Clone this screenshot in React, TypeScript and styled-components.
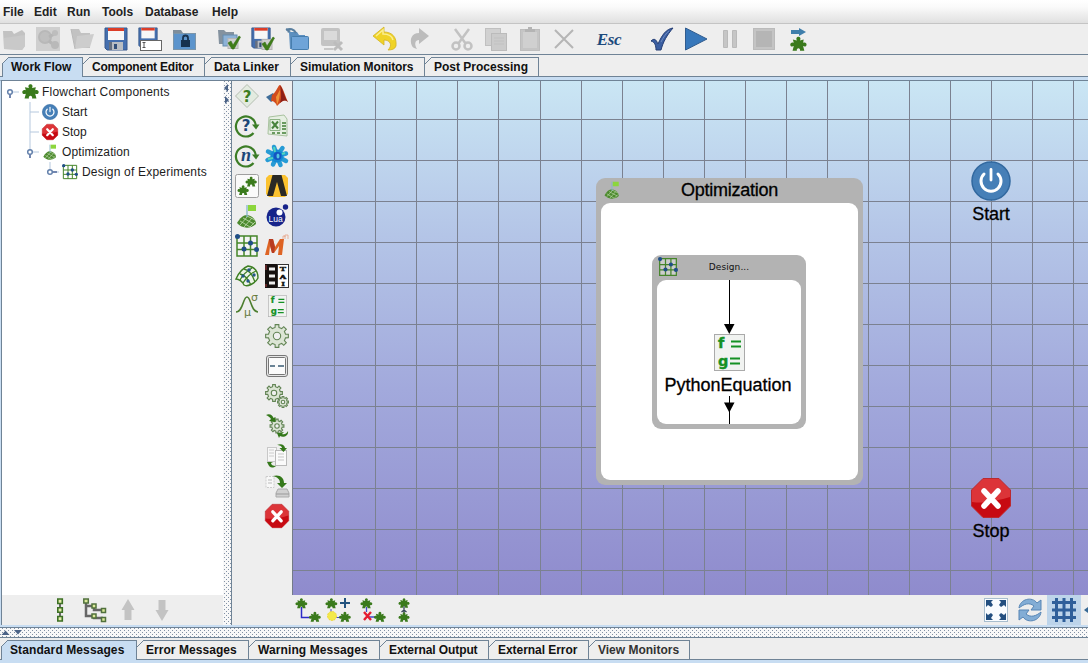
import React from "react";
import styled, { createGlobalStyle, css } from "styled-components";

const LINE = "#6f8396";
const BLUE = "#c8ddf2";
const PANEL = "#eeeeee";

const GlobalStyle = createGlobalStyle`
  * { box-sizing: border-box; }
  html, body { margin: 0; padding: 0; }
  body { font-family: "Liberation Sans", Arial, sans-serif; font-size: 12px; color: #222; background: ${PANEL}; overflow: hidden; }
  svg { display: block; flex: none; overflow: visible; }
`;

/* ---------- layout parts ---------- */

const Window = styled.div`
  width: 1088px;
  height: 663px;
  display: flex;
  flex-direction: column;
  background: ${PANEL};
  overflow: hidden;
`;

const MenuBar = styled.nav`
  height: 24px;
  display: flex;
  align-items: center;
  padding: 1px 0 0 3px;
  background: linear-gradient(#ffffff, #fafafa 30%, #e0e0e0);
  border-bottom: 1px solid #c4c4c4;
`;

const MenuItem = styled.span<{ $w: number }>`
  width: ${(p) => p.$w}px;
  font-weight: bold;
  letter-spacing: 0;
  white-space: nowrap;
`;

const ToolBar = styled.div`
  height: 31px;
  display: flex;
  align-items: center;
  margin-left: -3px;
  border-bottom: 1px solid ${LINE};
`;

const ToolGroup = styled.div<{ $gap: number }>`
  display: flex;
  margin-left: ${(p) => p.$gap}px;
`;

const ToolButton = styled.span`
  width: 34px;
  height: 30px;
  display: flex;
  align-items: center;
  justify-content: center;
`;

const EscLabel = styled.span`
  padding-top: 2px;
  font: italic bold 17px "Liberation Serif", serif;
  color: #1d4a7c;
  letter-spacing: -0.3px;
`;

const TabStrip = styled.div<{ $pad: number; $left: number }>`
  display: flex;
  padding-top: ${(p) => p.$pad}px;
  padding-left: ${(p) => p.$left}px;
  border-bottom: 1px solid ${LINE};
`;

const Tab = styled.div<{ $w: number; $active?: boolean; $dim?: boolean; $ls: number }>`
  position: relative;
  width: ${(p) => p.$w}px;
  height: 19px;
  padding-left: 9px;
  line-height: 18px;
  font-weight: bold;
  letter-spacing: ${(p) => p.$ls}px;
  white-space: nowrap;
  color: ${(p) => (p.$dim ? "#333" : "#111")};
  border-top: 1px solid ${LINE};
  border-right: 1px solid ${LINE};
  ${(p) =>
    p.$active &&
    css`
      border-left: 1px solid ${LINE};
      background: ${BLUE};
      margin-bottom: -1px;
      height: 20px;
      padding-left: 8px;
    `}
  &::before {
    content: "";
    position: absolute;
    left: ${(p) => (p.$active ? -1 : 0)}px;
    top: -1px;
    width: 7px;
    height: 7px;
    background: linear-gradient(135deg, ${PANEL} 0 43%, ${LINE} 44% 53%, ${(p) => (p.$active ? BLUE : PANEL)} 54%);
  }
`;

const BlueStripe = styled.div<{ $h: number }>`
  height: ${(p) => p.$h}px;
  background: ${BLUE};
`;

const Workspace = styled.main`
  height: 546px;
  display: flex;
  border-top: 1px solid ${LINE};
  border-left: 1px solid ${BLUE};
`;

const TreePanel = styled.aside`
  width: 222px;
  display: flex;
  flex-direction: column;
  border-left: 1px solid ${LINE};
`;

const Tree = styled.div`
  flex: 1;
  background: #fff;
  padding-top: 1px;
`;

const TreeRow = styled.div`
  height: 20px;
  display: flex;
  align-items: center;
  margin-left: -2px;
  color: #1c1c1c;
  white-space: nowrap;
`;

const TreeText = styled.span<{ $ls: number }>`
  padding-left: 2px;
  font-size: 12px;
  letter-spacing: ${(p) => p.$ls}px;
`;

const TreeActions = styled.div`
  height: 30px;
  display: flex;
  align-items: center;
  padding-left: 41px;
  background: ${PANEL};
`;

const bumps = css`
  background-color: #f8f8f8;
  background-image: radial-gradient(circle at 0.5px 0.5px, #8291a5 0.5px, transparent 0.6px),
    radial-gradient(circle at 0.5px 0.5px, #8291a5 0.5px, transparent 0.6px);
  background-size: 4px 4px;
`;

const VDivider = styled.div`
  width: 9px;
  border-right: 1px solid ${LINE};
  ${bumps}
  background-position: 1px 0, 3px 2px;
`;

const HDivider = styled.div`
  height: 11px;
  border-top: 1px solid ${LINE};
  border-bottom: 1px solid ${LINE};
  ${bumps}
  background-position: 0 2px, 2px 4px;
`;

const Palette = styled.div`
  width: 60px;
  display: flex;
`;

const PaletteColumn = styled.div`
  width: 30px;
  display: flex;
  flex-direction: column;
`;

const PaletteCell = styled.span`
  height: 30px;
  display: flex;
  align-items: center;
  justify-content: center;
`;

const CanvasColumn = styled.section`
  flex: 1;
  min-width: 0;
  display: flex;
  flex-direction: column;
`;

const Canvas = styled.div`
  position: relative;
  flex: 1;
  overflow: hidden;
  border-left: 1px solid #747b88;
  background: linear-gradient(#cae6f4, #b4c5e7 30%, #a2a9dc 60%, #8f8bcd);
`;

const CanvasBar = styled.div`
  height: 30px;
  display: flex;
  align-items: center;
  justify-content: space-between;
  padding-left: 2px;
`;

const BarGroup = styled.div`
  display: flex;
  height: 30px;
`;

const BarButton = styled.span<{ $w?: number; $on?: boolean }>`
  width: ${(p) => p.$w ?? 34}px;
  display: flex;
  align-items: center;
  justify-content: center;
  background: ${(p) => (p.$on ? "#bdd4ea" : "transparent")};
`;

/* nodes on the free flowchart canvas */

const Node = styled.div<{ $x: number; $y: number; $w: number }>`
  position: absolute;
  left: ${(p) => p.$x}px;
  top: ${(p) => p.$y}px;
  width: ${(p) => p.$w}px;
  display: flex;
  flex-direction: column;
  align-items: center;
  gap: 3px;
`;

const NodeLabel = styled.span<{ $ls?: number }>`
  font-size: 18px;
  line-height: 20px;
  color: #000;
  -webkit-text-stroke: 0.3px #000;
  letter-spacing: ${(p) => p.$ls ?? 0}px;
  white-space: nowrap;
`;

const Container = styled.div<{ $x: number; $y: number; $w: number; $h: number }>`
  position: absolute;
  left: ${(p) => p.$x}px;
  top: ${(p) => p.$y}px;
  width: ${(p) => p.$w}px;
  height: ${(p) => p.$h}px;
  display: flex;
  flex-direction: column;
  padding: 0 5px 5px;
  border-radius: 9px;
  background: #b3b3b3;
`;

const ContainerHeader = styled.div`
  height: 25px;
  display: grid;
  grid-template-columns: 22px 1fr 22px;
  align-items: center;
  justify-items: center;
`;

const ContainerBody = styled.div`
  position: relative;
  flex: 1;
  border-radius: 9px;
  background: #fff;
`;

const SmallLabel = styled.span`
  font: 9px "DejaVu Sans", sans-serif;
  letter-spacing: 0.1px;
  color: #111;
`;

const PythonNode = styled.div`
  height: 100%;
  display: flex;
  flex-direction: column;
  align-items: center;
`;

const PythonCaption = styled.div`
  padding: 4px 2px 0 0;
`;

/* ---------- icons ---------- */

type SvgProps = { s?: number; w?: number; h?: number; box?: string; children: React.ReactNode };
const Svg = ({ s = 24, w, h, box, children }: SvgProps) => (
  <svg width={w ?? s} height={h ?? s} viewBox={box ?? "0 0 24 24"} fill="none">
    {children}
  </svg>
);

const GREEN = "#3a7a1c";
const GREY = "#c2c2c2";
const PUZZLE =
  "M3 5L9.500 6.500C5.500 -1.500 18.500 -1.500 14.500 6.500L20.500 5L19.500 10C27 7 27 19 19.500 15.500L21.500 23H14.500C16 17.500 8 17.500 9.500 23H2.500L4.500 15.500C-3 19 -3 7 4.500 10Z";

const Puzzle = ({ x = 0, y = 0, k = 1, c = GREEN }: { x?: number; y?: number; k?: number; c?: string }) => (
  <path d={PUZZLE} fill={c} transform={`translate(${x} ${y}) scale(${k})`} />
);

const Folder = ({ open, c = GREY }: { open?: boolean; c?: string }) =>
  open ? (
    <Svg>
      <path d="M1 2H9L11 6H20V21H5Z" fill={c} />
      <path d="M7 9L24 7L20 20L5 22Z" fill="#cdcdcd" />
      <path d="M1 2L5 22" stroke="#b9b9b9" />
    </Svg>
  ) : (
    <Svg>
      <path d="M1 4H10L12 7L20 3L23 6V19L20 23L2 22Z" fill={c} />
      <path d="M2 11L23 8V19L20 23L2 22Z" fill="#c9c9c9" />
    </Svg>
  );

const GreyBrowse = () => (
  <Svg>
    <rect x="0" y="0" width="24" height="24" fill="#cfcfcf" />
    <circle cx="9" cy="10" r="6" fill="#bfbfbf" stroke="#b8b8b8" strokeWidth="2" />
    <path d="M13 10L20 6M13 14L19 19" stroke="#b5b5b5" strokeWidth="3" />
    <circle cx="19" cy="6" r="3" fill="#bdbdbd" />
    <circle cx="19" cy="18" r="4" fill="#b9b9b9" />
  </Svg>
);

const Disk = ({ x = 0, y = 0, w = 24, h = 24 }) => (
  <svg x={x} y={y} width={w} height={h} viewBox="0 0 24 24" preserveAspectRatio="none">
    <path d="M1 1H23V23H3L1 21Z" fill="#456fae" stroke="#38598c" />
    <rect x="4" y="1" width="16" height="12" fill="#f7f7f7" />
    <rect x="4" y="1" width="16" height="3" fill="#dc3d28" />
    <rect x="5" y="15" width="14" height="8" fill="#667080" />
    <rect x="8" y="15" width="11" height="8" fill="#b9bdc2" />
    <rect x="10" y="17" width="3" height="5" fill="#334f78" />
  </svg>
);

const Save = () => <Svg><Disk /></Svg>;
const SaveAs = () => (
  <Svg>
    <Disk x={0} y={0} w={20} h={21} />
    <rect x="2.500" y="13.500" width="21" height="10" fill="#fff" stroke="#666" />
    <path d="M4.500 15.500h3M4.500 20.500h3M6 16v4" stroke="#555" />
  </Svg>
);
const LockedFolder = () => (
  <Svg>
    <path d="M1 3H9L11 6H21V10H1Z" fill="#7f8e9b" />
    <rect x="1.500" y="6.500" width="22" height="16" fill="#5c94cc" stroke="#7b95aa" />
    <rect x="9" y="13" width="9" height="7" fill="#17324f" />
    <path d="M11 13v-2a2.500 2.500 0 0 1 5 0v2" stroke="#17324f" strokeWidth="1.800" />
  </Svg>
);
const GreenCheck = ({ x = 0, y = 0 }) => (
  <g transform={`translate(${x} ${y})`}>
    <rect x="0" y="2.500" width="10" height="10" fill="#cfcfcf" stroke="#b5b5b5" />
    <path d="M0 7L3 5L5 9L11 0L12.500 1L6 13H4Z" fill="#3f7d18" stroke="#37701a" strokeWidth=".6" />
  </g>
);
const FolderCheck = () => (
  <Svg>
    <path d="M1 3H7L9 5H17V17H2Z" fill="#84929f" />
    <rect x="6" y="8" width="14" height="11" fill="#8db2d7" stroke="#668cae" />
    <GreenCheck x={11} y={9} />
  </Svg>
);
const SaveCheck = () => (
  <Svg>
    <Disk x={0} y={0} w={20} h={22} />
    <GreenCheck x={11} y={10} />
  </Svg>
);
const OpenFolderBlue = () => (
  <Svg>
    <path d="M4 5H12L14 8H20V22H5Z" fill="#5c8fbf" />
    <rect x="6.500" y="9.500" width="17" height="13" rx="1" fill="#6fa4d8" stroke="#477eae" />
    <path d="M1 3C5 1 9 2 11 6" stroke="#5a7f9f" strokeWidth="2" />
    <path d="M1 1L3 6L6 4Z" fill="#5a7f9f" />
  </Svg>
);
const GreySaveX = () => (
  <Svg>
    <rect x="2" y="1" width="19" height="18" rx="2" fill="#c3c3c3" />
    <rect x="5" y="4" width="13" height="9" fill="#dadada" />
    <path d="M5 22H14" stroke="#c8c8c8" strokeWidth="2" />
    <path d="M15 15L23 23M23 15L15 23" stroke="#bcbcbc" strokeWidth="3" />
  </Svg>
);
const Undo = () => (
  <Svg>
    <path d="M0 9L11 0V5C19 5 24 10 23 19C22 22 19 23 15 23C20 18 17 13 11 13V18Z" fill="#f0d326" stroke="#d2b226" strokeWidth=".8" />
    <path d="M3 9L10 3V7C15 7 19 9 20 13" stroke="#faee91" strokeWidth="1.500" />
  </Svg>
);
const Redo = () => (
  <Svg>
    <path d="M22 9L12 1V6C5 6 2 12 5 19C6 21 8 21 10 22C7 17 8 13 12 13V17Z" fill="#bcbcbc" />
  </Svg>
);
const Cut = () => (
  <Svg>
    <path d="M5 2L16 17M19 2L8 17" stroke={GREY} strokeWidth="2.500" />
    <circle cx="6" cy="19" r="3.500" stroke={GREY} strokeWidth="2.500" />
    <circle cx="18" cy="19" r="3.500" stroke={GREY} strokeWidth="2.500" />
  </Svg>
);
const Copy = () => (
  <Svg>
    <rect x="1.500" y="1.500" width="15" height="17" fill="#d1d1d1" stroke="#c0c0c0" />
    <rect x="7.500" y="6.500" width="15" height="17" fill="#cbcbcb" stroke="#bbb" />
    <path d="M10 11h10M10 14h10M10 17h10" stroke="#c1c1c1" />
  </Svg>
);
const Paste = () => (
  <Svg>
    <rect x="2.500" y="2.500" width="19" height="21" fill="#c5c5c5" stroke="#bdbdbd" />
    <rect x="5" y="5" width="14" height="16" fill="#d0d0d0" />
    <path d="M7 5V2H10V0H14V2H17V5Z" fill="#b4b4b4" />
  </Svg>
);
const Cross = () => (
  <Svg><path d="M3 3L21 21M21 3L3 21" stroke="#b5b5b5" strokeWidth="2" /></Svg>
);
const BlueCheck = () => (
  <Svg>
    <path d="M1 14C4 11 6 12 8 17C12 8 16 2 23 1C17 8 13 15 11 23H6C6 19 5 15 1 14Z" fill="#3b5fa2" stroke="#263f75" />
    <path d="M11 15C13 11 16 6 19 4" stroke="#6f8bc0" strokeWidth="1" />
  </Svg>
);
const Play = () => (
  <Svg><path d="M1.500 1L23 12L1.500 23Z" fill="#3878bb" stroke="#315c8e" /></Svg>
);
const Pause = () => (
  <Svg><path d="M5.500 3.500h4v17h-4zM14.500 3.500h4v17h-4z" fill="#c6c6c6" stroke="#bababa" /></Svg>
);
const StopGrey = () => (
  <Svg>
    <rect x="1.500" y="1.500" width="21" height="21" fill="#c4c4c4" stroke="#bbb" />
    <rect x="4" y="4" width="16" height="16" fill="#b5b5b5" />
  </Svg>
);
const StepPuzzle = () => (
  <Svg>
    <path d="M5 3h8V1L20 5L13 9V7H5Z" fill="#3f7eab" />
    <Puzzle x={5} y={9.500} k={0.62} />
  </Svg>
);

const Power = ({ s }: { s: number }) => (
  <Svg s={s} box="0 0 40 40">
    <circle cx="20" cy="20" r="19" fill="#467fb7" stroke="#31689f" strokeWidth="1.500" />
    <path d="M13 13A10 10 0 1 0 27 13" stroke="#fff" strokeWidth="3" strokeLinecap="round" />
    <path d="M20 8.500V19" stroke="#fff" strokeWidth="2.800" strokeLinecap="round" />
  </Svg>
);
const StopSign = ({ s }: { s: number }) => (
  <Svg s={s} box="0 0 40 40">
    <path d="M12 .5H28L39.500 12V28L28 39.500H12L.5 28V12Z" fill="#dc3438" stroke="#b92a31" />
    <path d="M1 24C15 26 28 22 39 19V28L28 39H12L1 28Z" fill="#c70a12" />
    <path d="M13 13L27 28M27 13L13 28" stroke="#fff" strokeWidth="5.500" strokeLinecap="round" />
  </Svg>
);
const FlagMound = ({ s }: { s: number }) => (
  <Svg s={s}>
    <path d="M2 19C5 14 8 11 12 11C18 12 21 16 21 20C16 25 7 25 2 19Z" fill="#4c8a2e" />
    <path d="M5 17L15 23M8 14L19 20M12 12L20 16M5 21L13 12M9 23L17 14M15 23L20 18" stroke="#c4ddb2" strokeWidth=".8" />
    <path d="M12 13V1" stroke="#85b6c8" strokeWidth="1.300" />
    <path d="M13 1H21V7H13Z" fill="#8cd63c" />
  </Svg>
);
const GridPoints = ({ s }: { s: number }) => (
  <Svg s={s}>
    <rect x="2" y="2" width="20" height="20" fill="#fff" fillOpacity=".35" />
    <path d="M2 2H22V22H2ZM9 2V22M15.500 2V22M2 9H22M2 15.500H22" stroke="#45852a" strokeWidth="1.500" />
    <g fill="#1f4e86">
      <circle cx="2.500" cy="2.500" r="2.500" /><circle cx="15.500" cy="9" r="2.500" />
      <circle cx="9" cy="15" r="2.500" /><circle cx="21.500" cy="15.500" r="2.500" />
    </g>
  </Svg>
);
const FG = ({ w, h }: { w: number; h: number }) => (
  <Svg w={w} h={h} box="0 0 31 37">
    <rect x=".5" y=".5" width="30" height="36" fill="#f1f3f1" stroke="#aaa" />
    <g fill="#159124" stroke="#159124" strokeWidth=".4" fontFamily="DejaVu Sans" fontWeight="bold" fontSize="14.500">
      <text x="4" y="14">f</text><text x="4" y="31.500">g</text>
    </g>
    <path d="M17 7.500h10M17 12.500h10M16 24.500h10M16 29.500h10" stroke="#159124" strokeWidth="2" />
  </Svg>
);

const QDiamond = () => (
  <Svg>
    <path d="M12 .5L23.500 12L12 23.500L.5 12Z" fill="#e3ebe0" stroke="#b3bdb0" />
    <text x="12" y="17.500" textAnchor="middle" fill="#3d7d20" fontFamily="DejaVu Sans" fontWeight="bold" fontSize="15">?</text>
  </Svg>
);
const Loop = ({ ch, serif }: { ch: string; serif?: boolean }) => (
  <Svg>
    <path d="M18.500 19A10 10 0 1 1 20.800 11" stroke="#3c7d26" strokeWidth="2.200" />
    <path d="M17 10.500H24.500L21 15.500Z" fill="#3c7d26" />
    <text x="11" y="17" textAnchor="middle" fill="#1c4777" fontFamily={serif ? "Liberation Serif" : "DejaVu Sans"} fontStyle={serif ? "italic" : "normal"} fontWeight="bold" fontSize={serif ? 18 : 15}>{ch}</text>
  </Svg>
);
const PuzzlePair = () => (
  <Svg>
    <rect x=".5" y=".5" width="23" height="23" rx="2" fill="#fafafa" stroke="#9f9f9f" />
    <Puzzle x={11} y={2.500} k={0.43} /><Puzzle x={3} y={11} k={0.43} />
  </Svg>
);
const MeshSurface = () => (
  <Svg>
    <path d="M1 15C4 8 8 4 13 2C20 3 23 8 23 14C20 20 12 23 9 21C8 18 4 15 1 15Z" fill="#edf4e9" stroke="#3e7f24" strokeWidth="1.400" />
    <path d="M5 10C11 11 14 17 16 21M9 5C14 6 18 12 20 18M5 16C8 10 12 7 17 4M8 19C11 14 16 9 21 7" stroke="#3e7f24" strokeWidth="1.300" />
    <g fill="#245789"><circle cx="14" cy="6" r="1.800" /><circle cx="19" cy="11" r="1.700" /><circle cx="8" cy="12" r="1.700" /><circle cx="13" cy="17" r="1.700" /></g>
  </Svg>
);
const Gauss = () => (
  <Svg>
    <path d="M1 18C8 18 8 3 12 3S16 18 23 18" stroke="#4c7e2f" strokeWidth="1.600" />
    <text x="16" y="7" fontSize="11" fontFamily="DejaVu Sans" fill="#66793c">σ</text>
    <text x="9" y="22" fontSize="11" fontFamily="DejaVu Sans" fill="#66793c">μ</text>
  </Svg>
);
const Matlab = () => (
  <Svg>
    <path d="M1 13L8 9L12 14L6 18Z" fill="#3f6d99" />
    <path d="M7 11C11 9 13 1 15 1C18 3 20 12 23 18C19 15 17 17 12 22C11 19 9 17 6 17Z" fill="#d14b1d" />
    <path d="M15 1C18 5 19 12 23 18C19 15 18 17 15 19C17 13 16 7 15 1Z" fill="#8d1e17" />
    <path d="M11 13C13 10 14 7 15 6C15 12 14 17 12 21Z" fill="#ef9338" />
  </Svg>
);
const Excel = () => (
  <Svg>
    <path d="M4 3L19 1L22 5V22L3 20Z" fill="#e6efe2" stroke="#a9c29f" />
    <path d="M7 7.500L13 14.500M13 7.500L7 14.500" stroke="#48833c" strokeWidth="2" />
    <path d="M5 5.500h10v11H5z" stroke="#8db384" />
    <path d="M17 9h4M17 12h4M17 15h4M7 19h3M12 19h3M17 19h4" stroke="#6a9a60" strokeWidth="1.800" />
  </Svg>
);
const Flower = () => (
  <Svg>
    <g stroke="#279bd5" strokeWidth="4.500" strokeLinecap="round"><path d="M12 12L9 3M12 12L17.500 4M12 12L21 9.500M12 12L21 17M12 12L15.500 21M12 12L8 20.500M12 12L2.500 16M12 12L3 7.500" /></g>
    <circle cx="12" cy="12" r="6.500" fill="#158ad4" />
    <path d="M9 3L10 8M3 15L8 14M20 9L17 10" stroke="#52d6bd" strokeWidth="2" />
    <circle cx="12.500" cy="12" r="4" fill="#1554c1" /><ellipse cx="13" cy="12" rx="1.500" ry="2.500" fill="#55c7e1" />
  </Svg>
);
const Ansys = () => (
  <Svg>
    <path d="M4 1H20L23 4V20L20 23H4L1 20V4Z" fill="#fbc22f" />
    <path d="M7.500 1H16.500L22 22H16L12 8L8 22H2Z" fill="#2a2925" />
  </Svg>
);
const Lua = () => (
  <Svg>
    <circle cx="11" cy="13" r="9.500" fill="#17248a" />
    <circle cx="14.500" cy="8.500" r="3" fill="#fff" /><circle cx="20.500" cy="3" r="2.700" fill="#17248a" />
    <text x="10.700" y="18" textAnchor="middle" fontFamily="Liberation Sans" fontSize="8.500" fill="#fff">Lua</text>
  </Svg>
);
const MLogo = () => (
  <Svg>
    <path d="M0 21L4 5H8L10 13L15 5H19L17 21H13L14 12L9 19H7L5 12L4 21Z" fill="#de6424" />
    <path d="M4 5H8L10 13L9 19H7L5 11Z" fill="#b83b20" />
    <path d="M18 5V2h2v3M20 3V1h3v4" stroke="#e6a287" strokeWidth=".8" />
  </Svg>
);
const Tai = () => (
  <Svg>
    <rect width="12" height="24" fill="#15100f" /><rect x="12.500" y=".5" width="11" height="23" fill="#fff" stroke="#333" />
    <path d="M4 5h6M4 12h6M4 19h6" stroke="#eee" strokeWidth="3" /><path d="M1 1v5M1 20v3" stroke="#a5383b" />
    <g transform="translate(18 0) scale(1.400 1)" fontFamily="Liberation Serif" fontSize="6.800" fontWeight="bold" textAnchor="middle" fill="#111" stroke="#111" strokeWidth=".4"><text x="0" y="6.800">T</text><text x="0" y="14.600">A</text><text x="0" y="22.400">I</text></g>
  </Svg>
);

const gearPath = (cx: number, cy: number, r: number) => {
  const pts: string[] = [];
  const n = 8;
  for (let i = 0; i < n; i++) {
    const base = (i / n) * Math.PI * 2 - Math.PI / 2;
    [[-0.22, 0.76], [-0.16, 1], [0.16, 1], [0.22, 0.76]].forEach(([a, q]) =>
      pts.push(`${(cx + Math.cos(base + a) * r * q).toFixed(2)} ${(cy + Math.sin(base + a) * r * q).toFixed(2)}`)
    );
  }
  return `M${pts.join("L")}Z`;
};
const Cog = ({ cx, cy, r }: { cx: number; cy: number; r: number }) => (
  <g fill="#dce5d5" stroke="#628454" strokeWidth="1.100">
    <path d={gearPath(cx, cy, r)} />
    <circle cx={cx} cy={cy} r={r * 0.32} fill="#f0f0f0" />
  </g>
);
const Gear = () => <Svg><Cog cx={12} cy={12} r={11.500} /></Svg>;
const Gears = () => <Svg><Cog cx={9} cy={9} r={8.500} /><Cog cx={18} cy={18} r={5.500} /></Svg>;
const GearLoop = () => (
  <Svg>
    <Cog cx={12} cy={12} r={7} />
    <path d="M1 1C5 -1 8 2 8.500 4L10.500 3V8L4 7L6 5C5 3 3 2 1 1ZM23 17C24 22 18 24 15 22L14 24L12 19L19 18L17 20C20 21 22 19 23 17Z" fill="#34781a" />
  </Svg>
);
const DashBox = () => (
  <Svg>
    <rect x="1.500" y="1.500" width="21" height="21" rx="2.500" fill="#e6e6e6" stroke="#777" />
    <rect x="3.500" y="3.500" width="17" height="17" rx="1" fill="#fbfbfb" stroke="#777" />
    <path d="M5 12H10M13 12H19" stroke="#3b5c74" strokeWidth="1.500" />
  </Svg>
);
const FilesLoop = () => (
  <Svg>
    <rect x="2.500" y="3.500" width="9" height="14" fill="#f7f7f7" stroke="#c8c8c8" />
    <path d="M4 6h5M4 9h5M4 12h5" stroke="#ccc" />
    <rect x="10.500" y="6.500" width="11" height="15" fill="#fafafa" stroke="#b9b9b9" />
    <path d="M13 10h6M13 13h6M13 16h6" stroke="#c7c7c7" />
    <path d="M12 1C17 -1 20 2 20 4H22L18.500 8L14.500 4H17C17 2 14 1 12 1ZM2 18H8L6 19C6 21 8 22 11 22C7 25 4 23 3 20Z" fill="#34781a" />
  </Svg>
);
const FileToDrive = () => (
  <Svg>
    <rect x="1" y="2.500" width="8" height="11" fill="#f8f8f8" stroke="#ccc" strokeDasharray="2 1" />
    <path d="M3 6h4M3 9h4" stroke="#bbb" />
    <path d="M8 2C15 0 19 4 19 9H22L17 14L12 9H15C15 5 12 3 8 2Z" fill="#34781a" />
    <path d="M13 15H22L24 19V23H11V19Z" fill="#d0d0d0" stroke="#aaa" /><path d="M11 20H24" stroke="#999" />
  </Svg>
);

const ChainList = () => (
  <Svg w={34}>
    <path d="M12 2V22" stroke="#666" strokeWidth="2" />
    <g fill="#e5efae" stroke="#3d7024" strokeWidth="1.600"><path d="M9.800 1h4.500v4.500H9.800zM9.800 9.800h4.500v4.500H9.800zM9.800 18.500h4.500V23H9.800z" /></g>
  </Svg>
);
const ChainTree = () => (
  <Svg w={34}>
    <path d="M4 3V18H12M4 8H12M12 16V20H21M12 9V12H21" stroke="#666" strokeWidth="2.500" />
    <g fill="#dbe99a" stroke="#51713d" strokeWidth="1.500"><path d="M1.800 1h4.500v4H1.800zM10 6h4v4h-4zM10 16h4v4h-4zM19.500 10.500h4v4h-4zM19.500 19.500h4v4h-4z" /></g>
  </Svg>
);
const Arrow = ({ down }: { down?: boolean }) => (
  <Svg w={34}>
    <path d="M12 1L18.500 12H15.500V22H8.500V12H5.500Z" fill="#c3c3c3" transform={down ? "rotate(180 12 12)" : undefined} />
  </Svg>
);

const LinkAB = () => (
  <Svg><path d="M5.500 9V19.500H14" stroke="#2c2bc8" strokeWidth="1.500" /><Puzzle k={0.45} /><Puzzle x={13.500} y={13.500} k={0.45} /></Svg>
);
const LinkAdd = () => (
  <Svg>
    <path d="M4 11V14M9 19.500H14" stroke="#4349c7" />
    <circle cx="5" cy="18" r="4.500" fill="#f4e949" stroke="#eed739" strokeDasharray="2 1" />
    <Puzzle x={-1} k={0.45} /><Puzzle x={12.500} y={13.500} k={0.45} />
    <path d="M18 0V10M13 5H23" stroke="#22527e" strokeWidth="2" />
  </Svg>
);
const LinkDel = () => (
  <Svg>
    <path d="M5.500 9V14M8 19H15" stroke="#4349c7" strokeWidth="1.300" />
    <Puzzle k={0.45} /><Puzzle x={13.500} y={13.500} k={0.45} />
    <path d="M3 14L10 22M10 14L3 22" stroke="#e51c31" strokeWidth="2.400" />
  </Svg>
);
const LinkVert = () => (
  <Svg><path d="M12 8V18M9.500 14L12 12L14.500 14" stroke="#334653" strokeWidth="1.300" /><Puzzle x={7} k={0.42} /><Puzzle x={7} y={14} k={0.42} /></Svg>
);
const FitView = () => (
  <Svg>
    <rect x=".5" y=".5" width="23" height="23" fill="#f9fcff" stroke="#a7bdce" />
    <path d="M2 2H9L7 4L9 7L7 9L4 7L2 9ZM22 2H15L17 4L15 7L17 9L20 7L22 9ZM2 22H9L7 20L9 17L7 15L4 17L2 15ZM22 22H15L17 20L15 17L17 15L20 17L22 15Z" fill="#234f80" />
  </Svg>
);
const Refresh = () => (
  <Svg>
    <path d="M1 10C2 1 14 -2 19 5L23 2V12H13L16 8C11 4 6 6 1 10Z" fill="#83add5" stroke="#5685b5" />
    <path d="M23 14C22 23 10 26 5 19L1 22V12H11L8 16C13 20 18 18 23 14Z" fill="#83add5" stroke="#5685b5" />
  </Svg>
);
const GridToggle = () => (
  <Svg><path d="M4.500 0V24M12 0V24M19.500 0V24M0 4.500H24M0 12H24M0 19.500H24" stroke="#2f5f9a" strokeWidth="3" /></Svg>
);

const PuzzleLeaf = () => <Svg s={15}><Puzzle /></Svg>;

/* ---------- tree ---------- */

type NodeRow = { level: number; icon: React.ReactNode; text: string; ls: number; handle?: "open" | "closed"; up?: boolean; down?: boolean };

const Gutter = ({ row }: { row: NodeRow }) => (
  <Svg w={20} h={20} box="0 0 20 20">
    <path d={`${row.up ? "M10 0V10" : ""}${row.down ? "M10 10V20" : ""}M10 10H19`} stroke="#b5c8de" />
    {row.handle && (
      <>
        <path d={row.handle === "open" ? "M10 10V16" : "M10 10H17"} stroke="#7387b0" strokeWidth="2" />
        <circle cx="10" cy="10" r="2.300" fill="#fff" stroke="#6481ac" strokeWidth="1.500" />
      </>
    )}
  </Svg>
);

const Indent = styled.span<{ $n: number }>`
  width: ${(p) => p.$n * 20}px;
`;
const TreeIcon = styled.span`
  width: 20px;
  display: flex;
  justify-content: center;
`;

const rows: NodeRow[] = [
  { level: 0, icon: <PuzzleLeaf />, text: "Flowchart Components", ls: 0.22, handle: "open" },
  { level: 1, icon: <Power s={16} />, text: "Start", ls: 0, up: true, down: true },
  { level: 1, icon: <StopSign s={16} />, text: "Stop", ls: 0, up: true, down: true },
  { level: 1, icon: <FlagMound s={16} />, text: "Optimization", ls: 0.1, up: true, handle: "open" },
  { level: 2, icon: <GridPoints s={16} />, text: "Design of Experiments", ls: 0.2, up: true, handle: "closed" },
];

/* ---------- canvas grid ---------- */

const columns = Array.from({ length: 19 }, (_, i) => Math.round(41.200 + i * 41.060) + 0.5);
const lines = Array.from({ length: 12 }, (_, i) => 38.5 + i * 41);

const GridLines = () => (
  <svg width="796" height="514">
    <path d={columns.map((x) => `M${x} 0V514`).join("") + lines.map((y) => `M0 ${y}H796`).join("")} stroke="#7b8190" />
  </svg>
);

const tools: { gap: number; items: React.ReactNode[] }[] = [
  { gap: 0, items: [<Folder />, <GreyBrowse />, <Folder open />, <Save />, <SaveAs />, <LockedFolder />] },
  { gap: 11, items: [<FolderCheck />, <SaveCheck />, <OpenFolderBlue />, <GreySaveX />] },
  { gap: 20, items: [<Undo />, <Redo />] },
  { gap: 9, items: [<Cut />, <Copy />, <Paste />, <Cross />] },
  { gap: 11, items: [<EscLabel>Esc</EscLabel>] },
  { gap: 19, items: [<BlueCheck />, <Play />, <Pause />, <StopGrey />, <StepPuzzle />] },
];

const paletteLeft = [<QDiamond />, <Loop ch="?" />, <Loop ch="n" serif />, <PuzzlePair />, <FlagMound s={24} />, <GridPoints s={24} />, <MeshSurface />, <Gauss />];
const paletteRight = [<Matlab />, <Excel />, <Flower />, <Ansys />, <Lua />, <MLogo />, <Tai />, <FG w={19} h={22} />, <Gear />, <DashBox />, <Gears />, <GearLoop />, <FilesLoop />, <FileToDrive />, <StopSign s={24} />];

const menus: [string, number][] = [["File", 31], ["Edit", 33], ["Run", 35], ["Tools", 43], ["Database", 67], ["Help", 40]];

export default function App() {
  return (
    <Window>
      <GlobalStyle />
      <MenuBar>
        {menus.map(([label, w]) => <MenuItem key={label} $w={w}>{label}</MenuItem>)}
      </MenuBar>
      <ToolBar>
        {tools.map((g, i) => (
          <ToolGroup key={i} $gap={g.gap}>
            {g.items.map((icon, j) => <ToolButton key={j}>{icon}</ToolButton>)}
          </ToolGroup>
        ))}
      </ToolBar>
      <TabStrip $pad={2} $left={2}>
        <Tab $w={81} $active $ls={0}>Work Flow</Tab>
        <Tab $w={122} $ls={-0.2}>Component Editor</Tab>
        <Tab $w={86} $ls={-0.05}>Data Linker</Tab>
        <Tab $w={134} $ls={-0.1}>Simulation Monitors</Tab>
        <Tab $w={114} $ls={0}>Post Processing</Tab>
      </TabStrip>
      <BlueStripe $h={3} />
      <Workspace>
        <TreePanel>
          <Tree>
            {rows.map((row) => (
              <TreeRow key={row.text}>
                <Indent $n={row.level} />
                <Gutter row={row} />
                <TreeIcon>{row.icon}</TreeIcon>
                <TreeText $ls={row.ls}>{row.text}</TreeText>
              </TreeRow>
            ))}
          </Tree>
          <TreeActions>
            <BarButton><ChainList /></BarButton>
            <BarButton><ChainTree /></BarButton>
            <BarButton><Arrow /></BarButton>
            <BarButton><Arrow down /></BarButton>
          </TreeActions>
        </TreePanel>
        <VDivider>
          <Svg w={8} h={24} box="0 0 8 24"><path d="M5 3V11L1 7ZM2 15V23L6 19Z" fill="#4b6387" /></Svg>
        </VDivider>
        <Palette>
          <PaletteColumn>{paletteLeft.map((icon, i) => <PaletteCell key={i}>{icon}</PaletteCell>)}</PaletteColumn>
          <PaletteColumn>{paletteRight.map((icon, i) => <PaletteCell key={i}>{icon}</PaletteCell>)}</PaletteColumn>
        </Palette>
        <CanvasColumn>
          <Canvas>
            <GridLines />
            <Container $x={303} $y={97} $w={267} $h={307}>
              <ContainerHeader>
                <FlagMound s={18} />
                <NodeLabel $ls={-0.25}>Optimization</NodeLabel>
              </ContainerHeader>
              <ContainerBody>
                <Container $x={51} $y={52} $w={154} $h={174}>
                  <ContainerHeader>
                    <GridPoints s={20} />
                    <SmallLabel>Design...</SmallLabel>
                  </ContainerHeader>
                  <ContainerBody>
                    <PythonNode>
                      <Svg w={12} h={54} box="0 0 12 54"><path d="M6.500 0V46" stroke="#000" /><path d="M1 44H11.500L6.300 54Z" fill="#000" /></Svg>
                      <FG w={31} h={37} />
                      <PythonCaption><NodeLabel>PythonEquation</NodeLabel></PythonCaption>
                      <Svg w={12} h={29} box="0 0 12 29"><path d="M6.500 1V29" stroke="#000" /><path d="M1 7.500H11.500L6.300 17.500Z" fill="#000" /></Svg>
                    </PythonNode>
                  </ContainerBody>
                </Container>
              </ContainerBody>
            </Container>
            <Node $x={668} $y={80} $w={60}>
              <Power s={40} />
              <NodeLabel $ls={-0.1}>Start</NodeLabel>
            </Node>
            <Node $x={668} $y={397} $w={60}>
              <StopSign s={40} />
              <NodeLabel>Stop</NodeLabel>
            </Node>
          </Canvas>
          <CanvasBar>
            <BarGroup>
              <BarButton $w={28}><LinkAB /></BarButton>
              <BarButton><LinkAdd /></BarButton>
              <BarButton><LinkDel /></BarButton>
              <BarButton $w={28}><LinkVert /></BarButton>
            </BarGroup>
            <BarGroup>
              <BarButton><FitView /></BarButton>
              <BarButton><Refresh /></BarButton>
              <BarButton $on><GridToggle /></BarButton>
              <BarButton $w={7}><Svg w={7} h={8} box="0 0 7 8"><path d="M7 1V7L3 4Z" fill="#356894" /></Svg></BarButton>
            </BarGroup>
          </CanvasBar>
        </CanvasColumn>
      </Workspace>
      <BlueStripe $h={2} />
      <HDivider>
        <Svg w={24} h={9} box="0 0 24 9"><path d="M1.500 7H9.500L5.500 2.500ZM14 2H22L18 6.500Z" fill="#4b6387" /></Svg>
      </HDivider>
      <TabStrip $pad={2} $left={1}>
        <Tab $w={136} $active $ls={0.1}>Standard Messages</Tab>
        <Tab $w={112} $ls={0.05}>Error Messages</Tab>
        <Tab $w={131} $ls={0.1}>Warning Messages</Tab>
        <Tab $w={109} $ls={-0.1}>External Output</Tab>
        <Tab $w={100} $ls={-0.05}>External Error</Tab>
        <Tab $w={101} $dim $ls={0}>View Monitors</Tab>
      </TabStrip>
      <BlueStripe $h={3} />
    </Window>
  );
}
